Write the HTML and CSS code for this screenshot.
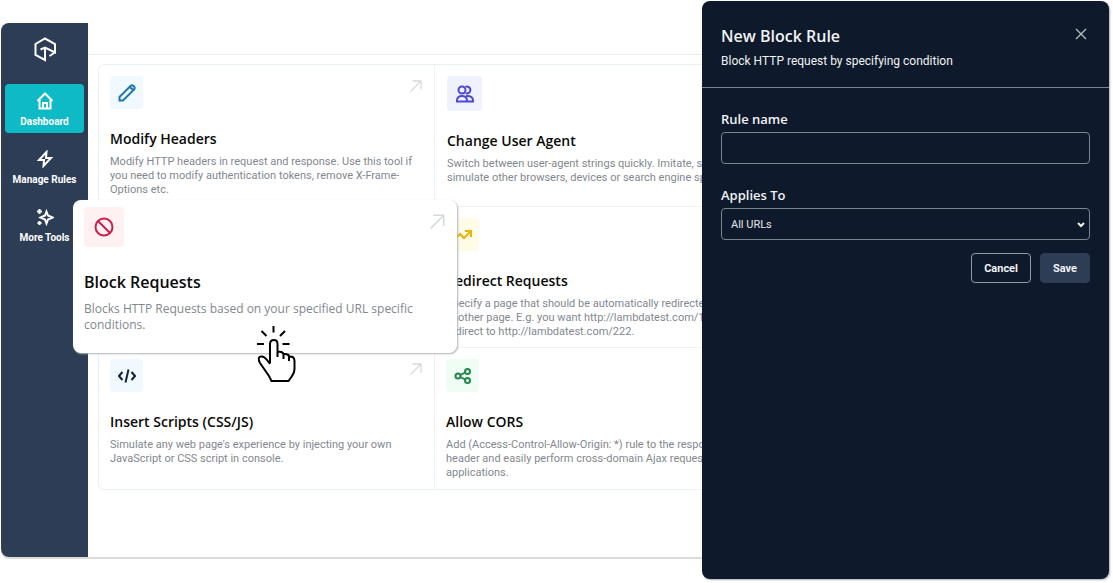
FILE: index.html
```html
<!DOCTYPE html>
<html lang="en">
<head>
    <meta charset="UTF-8">
    <meta name="viewport" content="width=device-width, initial-scale=1.0">
    <title>New Block Rule</title>
    <link rel="stylesheet" href="styles.css">
</head>
<body>
<div class="app">
    <nav class="sidebar">
        <a href="#" class="logo" aria-label="Home">
            <svg width="24" height="26" viewBox="0 0 24 26">
                <path d="M7.5 13.5 L12 11.5 L22 16.5 V8 L12 2.5 L2.5 8 V19 L12 24 V12 M16.5 20 L21 17"/>
            </svg>
        </a>
        <a href="#" class="nav-item active">
            <svg width="18" height="18" viewBox="0 0 18 18">
                <path d="M1.5 9 L9 1.5 L16.5 9 M3.5 7.5 V16.5 H14.5 V7.5 M7 16.5 V11 H11 V16.5"/>
            </svg>
            <span>Dashboard</span>
        </a>
        <a href="#" class="nav-item">
            <svg width="18" height="18" viewBox="0 0 18 18">
                <path d="M10.5 2 L3 10 H8 L7.5 16 L15 8 H10 Z"/>
            </svg>
            <span>Manage Rules</span>
        </a>
        <a href="#" class="nav-item">
            <svg width="18" height="18" viewBox="0 0 18 18">
                <path d="M10.5 3.5 L12 7.5 L16.5 9.5 L12 11.5 L10.5 15.5 L9 11.5 L4.5 9.5 L9 7.5 Z M3.5 1 V6 M1 3.5 H6 M3.5 13 V17 M1.5 15 H5.5"/>
            </svg>
            <span>More Tools</span>
        </a>
    </nav>
    <main class="content">
        <div class="topbar"></div>
        <div class="cards">
            <div class="card">
                <div class="card-top">
                    <span class="tile blue">
                        <svg width="18" height="18" viewBox="0 0 18 18">
                            <path d="M1.5 16.5 V13 L12.5 2 Q14 0.5 15.8 2.2 Q17.5 4 16 5.5 L5 16.5 Z M12 3 L15 6"/>
                        </svg>
                    </span>
                    <svg class="arrow" width="12" height="12" viewBox="0 0 12 12"><path d="M0.5 11.5 L11 1 M2.5 1 H11 V9.5"/></svg>
                </div>
                <h3>Modify Headers</h3>
                <p>Modify HTTP headers in request and response. Use this tool if you need to modify authentication tokens, remove X-Frame-Options etc.</p>
            </div>
            <div class="card card-agent">
                <div class="card-top">
                    <span class="tile indigo">
                        <svg width="18" height="18" viewBox="0 0 18 18">
                            <circle cx="6" cy="5" r="3.5"/>
                            <path d="M9.5 1.8 A3.5 3.5 0 1 1 9.5 8.2 M1 16.5 V15 Q1.5 11 6 11 Q10.5 11 11 15 V16.5 Z M10 11 Q16.5 10.5 17 15 V16.5 H11"/>
                        </svg>
                    </span>
                </div>
                <h3>Change User Agent</h3>
                <p>Switch between user-agent strings quickly. Imitate, spoof, simulate other browsers, devices or search engine spiders.</p>
            </div>
            <div class="card">
                <div class="card-raised">
                    <div class="card-top">
                        <span class="tile red">
                            <svg width="20" height="20" viewBox="0 0 20 20">
                                <circle cx="10" cy="10" r="8.5"/>
                                <path d="M4 4 L16 16"/>
                            </svg>
                        </span>
                        <svg class="arrow" width="15" height="15" viewBox="0 0 12 12"><path d="M0.5 11.5 L11 1 M2.5 1 H11 V9.5"/></svg>
                    </div>
                    <h3>Block Requests</h3>
                    <p>Blocks HTTP Requests based on your specified URL specific conditions.</p>
                    <svg class="pointer" width="40" height="58" viewBox="0 0 40 58">
                        <path d="M17.5 1 V7.5 M5.5 6 L10.5 11 M29 6 L24 11 M1 19 H8 M26.5 19 H33.5"/>
                        <path class="hand" d="M14 38 V19 Q14 15 18 15 Q21.5 15 21.5 19 V32 M21.5 27 Q27.5 26 27.5 30 V34 M27.5 29 Q33 28.5 33 32 V36 M33 31.5 Q38.5 31 38.5 36 V44 Q38.5 48 36 51 L32.5 56 H15.5 L13 51 L4 38 Q1 32 5 31.5 Q8 31 11 35 L14 39"/>
                    </svg>
                </div>
            </div>
            <div class="card">
                <div class="card-top">
                    <span class="tile yellow">
                        <svg width="18" height="18" viewBox="0 0 18 18">
                            <path d="M1 13 L6 8 L10 12 L16.5 5.5 M11 5 H17 V11"/>
                        </svg>
                    </span>
                </div>
                <h3>Redirect Requests</h3>
                <p>Specify a page that should be automatically redirected to another page. E.g. you want http://lambdatest.com/111 to redirect to http://lambdatest.com/222.</p>
            </div>
            <div class="card">
                <div class="card-top">
                    <span class="tile blue dark">
                        <svg width="18" height="18" viewBox="0 0 18 18">
                            <path d="M4.5 5 L1 9 L4.5 13 M13.5 5 L17 9 L13.5 13 M10.5 2.5 L7.5 15.5"/>
                        </svg>
                    </span>
                    <svg class="arrow" width="12" height="12" viewBox="0 0 12 12"><path d="M0.5 11.5 L11 1 M2.5 1 H11 V9.5"/></svg>
                </div>
                <h3>Insert Scripts (CSS/JS)</h3>
                <p>Simulate any web page's experience by injecting your own JavaScript or CSS script in console.</p>
            </div>
            <div class="card">
                <div class="card-top">
                    <span class="tile green">
                        <svg width="18" height="18" viewBox="0 0 18 18">
                            <circle cx="4" cy="9" r="2.5"/>
                            <circle cx="13.5" cy="4.5" r="2.5"/>
                            <circle cx="13.5" cy="13.5" r="2.5"/>
                            <path d="M6.5 8 L11 5.5 M6.5 10 L11 12.5"/>
                        </svg>
                    </span>
                </div>
                <h3>Allow CORS</h3>
                <p>Add (Access-Control-Allow-Origin: *) rule to the response header and easily perform cross-domain Ajax requests in applications.</p>
            </div>
        </div>
    </main>
</div>

<aside class="drawer">
    <div class="drawer-header">
        <div>
            <h2>New Block Rule</h2>
            <p>Block HTTP request by specifying condition</p>
        </div>
        <button type="button" class="close" aria-label="Close">
            <svg width="12" height="12" viewBox="0 0 12 12"><path d="M1 1 L11 11 M11 1 L1 11"/></svg>
        </button>
    </div>
    <form class="rule-form">
        <label for="ruleName">Rule name</label>
        <input type="text" id="ruleName">
        <label for="appliesTo">Applies To</label>
        <div class="select-wrap">
            <select id="appliesTo">
                <option>All URLs</option>
            </select>
            <svg width="8" height="6" viewBox="0 0 8 6"><path d="M1 1 L4 4 L7 1"/></svg>
        </div>
        <div class="actions">
            <button type="button" class="btn">Cancel</button>
            <button type="submit" class="btn btn-save">Save</button>
        </div>
    </form>
</aside>
</body>
</html>
```
FILE: styles.css
```css
* {
    box-sizing: border-box;
}

body {
    position: relative;
    display: flex;
    min-height: 100vh;
    margin: 0;
    padding: 23px 5px 26px 1px;
    overflow: hidden;
    background: #FFFFFF;
    font-family: 'Segoe UI', 'Open Sans', sans-serif;
}

h2, h3, p {
    margin: 0;
}

svg {
    display: block;
    fill: none;
    stroke: currentColor;
    stroke-width: 2;
}

.app {
    display: flex;
    flex: 1;
    border-radius: 8px;
    box-shadow: 0 2px 1px #DADADA;
}

.sidebar {
    display: flex;
    flex-direction: column;
    gap: 9px;
    width: 87px;
    padding: 13px 4px;
    background: #2D3D55;
    border-radius: 8px 0 0 8px;
}

.logo {
    display: flex;
    justify-content: center;
    height: 39px;
    color: #FFFFFF;
}

.nav-item {
    display: flex;
    flex-direction: column;
    align-items: center;
    gap: 4px;
    height: 49px;
    padding-top: 8px;
    border-radius: 4px;
    color: #FFFFFF;
    font-family: 'Segoe UI', Roboto, sans-serif;
    font-size: 10px;
    font-weight: 700;
    line-height: 16px;
    text-decoration: none;
    white-space: nowrap;
}

.nav-item.active {
    background: #0EBAC5;
}

.content {
    flex: 1;
}

.topbar {
    height: 32px;
    border-bottom: 1px solid #EAECEE;
}

.cards {
    display: grid;
    grid-template-columns: 336px 336px;
    grid-template-rows: 142px 141px 141px;
    width: 674px;
    margin: 9px 10px;
    border: 1px solid #EAF1F5;
    border-radius: 6px;
}

.card {
    position: relative;
    padding: 11px;
    border-right: 1px solid #EEF2F5;
    border-bottom: 1px solid #EEF2F5;
}

.card:nth-last-child(-n+2) {
    border-bottom: none;
}

.card-top {
    display: flex;
    justify-content: space-between;
    margin-bottom: 20px;
}

.tile {
    display: flex;
    align-items: center;
    justify-content: center;
    width: 33px;
    height: 33px;
    border-radius: 4px;
}

.blue {
    background: #F0F9FF;
    color: #2077AC;
}

.dark {
    color: #14213A;
}

.indigo {
    background: #EEF2FF;
    color: #5046D0;
}

.red {
    background: #FFF0F1;
    color: #CB1F4C;
}

.yellow {
    background: #FFFBE6;
    color: #EAB308;
}

.green {
    background: #F0FDF4;
    color: #21874A;
}

.arrow {
    margin: 4px 1px 0 0;
    color: #D6DADD;
    stroke-width: 1.3;
}

.card h3 {
    font-size: 14px;
    font-weight: 600;
    line-height: 20px;
    color: #0A0A0A;
}

.card p {
    margin-top: 6px;
    padding-right: 9px;
    font-family: 'Segoe UI', Roboto, sans-serif;
    font-size: 11px;
    line-height: 14px;
    color: #82888F;
}

.card-agent {
    padding: 11px 12px;
}

.card-agent .tile {
    width: 35px;
    height: 35px;
}

.card-raised {
    position: absolute;
    top: -7px;
    left: -26px;
    z-index: 1;
    width: 384px;
    height: 153px;
    padding: 7px 11px;
    background: #FFFFFF;
    border-radius: 8px;
    box-shadow: 1px 1px 2px #B0B4B8;
}

.card-raised .card-top {
    margin-bottom: 24px;
}

.card-raised .tile {
    width: 40px;
    height: 40px;
}

.card-raised .arrow {
    margin-top: 7px;
}

.card-raised h3 {
    font-size: 16px;
    line-height: 22px;
}

.card-raised p {
    margin-top: 8px;
    font-family: 'Segoe UI', 'Open Sans', sans-serif;
    font-size: 12px;
    line-height: 16px;
}

.pointer {
    position: absolute;
    top: 125px;
    left: 183px;
    color: #000000;
}

.hand {
    fill: #FFFFFF;
}

.drawer {
    position: absolute;
    top: 1px;
    right: 4px;
    bottom: 4px;
    z-index: 2;
    width: 407px;
    background: #0E192B;
    border-radius: 8px;
    box-shadow: 1px 1px 2px #A9ADB8;
    color: #F1F3F5;
}

.drawer-header {
    display: flex;
    justify-content: space-between;
    align-items: flex-start;
    height: 87px;
    padding: 23px 19px;
    border-bottom: 1px solid #7D8591;
}

.drawer-header h2 {
    font-size: 16px;
    font-weight: 600;
    line-height: 24px;
}

.drawer-header p {
    margin-top: 5px;
    font-family: 'Segoe UI', Roboto, sans-serif;
    font-size: 12px;
    line-height: 16px;
}

.close {
    margin-top: 4px;
    padding: 0 3px;
    background: none;
    border: none;
    color: #B8BDC3;
    cursor: pointer;
}

.close svg {
    stroke-width: 1.3;
}

.rule-form {
    display: flex;
    flex-direction: column;
    padding: 21px 19px;
}

.rule-form label {
    margin-bottom: 3px;
    font-size: 13px;
    font-weight: 600;
    line-height: 20px;
}

.rule-form input,
.rule-form select {
    display: block;
    width: 100%;
    height: 32px;
    padding: 0 9px;
    background: #0E192B;
    border: 1px solid #7D8591;
    border-radius: 4px;
    color: #E4E7EA;
    font-family: 'Segoe UI', Roboto, sans-serif;
    font-size: 11px;
    appearance: none;
}

.rule-form input {
    margin-bottom: 21px;
}

.select-wrap {
    position: relative;
}

.select-wrap svg {
    position: absolute;
    top: 14px;
    right: 5px;
}

.actions {
    display: flex;
    justify-content: flex-end;
    gap: 9px;
    margin-top: 13px;
}

.btn {
    height: 30px;
    padding: 0 12px;
    background: none;
    border: 1px solid #9299A3;
    border-radius: 4px;
    color: #F1F3F5;
    font-family: 'Segoe UI', Roboto, sans-serif;
    font-size: 11px;
    font-weight: 700;
    cursor: pointer;
}

.btn-save {
    background: #2D3D55;
    border-color: #2D3D55;
}
```
